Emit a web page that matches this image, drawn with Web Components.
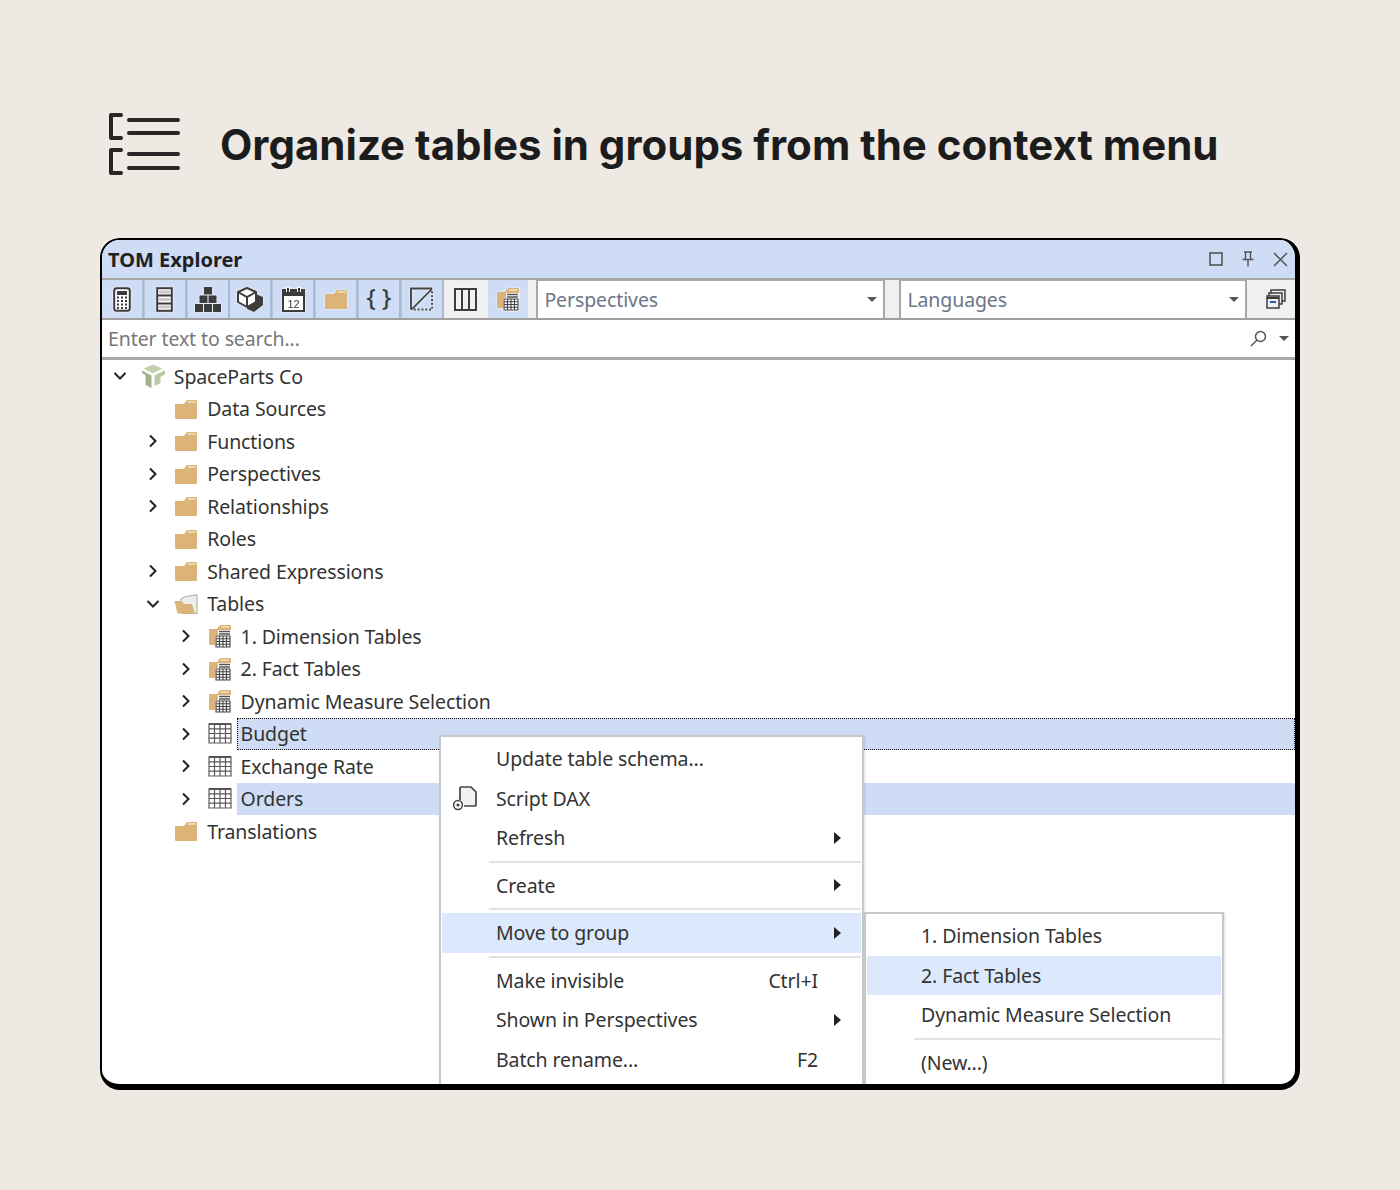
<!DOCTYPE html>
<html>
<head>
<meta charset="utf-8">
<title>TOM Explorer</title>
<style>
  html, body { margin: 0; padding: 0; background: #eee9e2; }
</style>
</head>
<body>
<page-shell>
  <page-heading>Organize tables in groups from the context menu</page-heading>
  <tom-explorer>
    <tree-row level="0" toggle="open" icon="model">SpaceParts Co</tree-row>
    <tree-row level="1" icon="folder">Data Sources</tree-row>
    <tree-row level="1" toggle="closed" icon="folder">Functions</tree-row>
    <tree-row level="1" toggle="closed" icon="folder">Perspectives</tree-row>
    <tree-row level="1" toggle="closed" icon="folder">Relationships</tree-row>
    <tree-row level="1" icon="folder">Roles</tree-row>
    <tree-row level="1" toggle="closed" icon="folder">Shared Expressions</tree-row>
    <tree-row level="1" toggle="open" icon="folder-open">Tables</tree-row>
    <tree-row level="2" toggle="closed" icon="folder-table">1. Dimension Tables</tree-row>
    <tree-row level="2" toggle="closed" icon="folder-table">2. Fact Tables</tree-row>
    <tree-row level="2" toggle="closed" icon="folder-table">Dynamic Measure Selection</tree-row>
    <tree-row level="2" toggle="closed" icon="table" selected focused>Budget</tree-row>
    <tree-row level="2" toggle="closed" icon="table">Exchange Rate</tree-row>
    <tree-row level="2" toggle="closed" icon="table" selected>Orders</tree-row>
    <tree-row level="1" icon="folder">Translations</tree-row>

    <context-menu slot="overlay" style="left:337px; top:495px; width:425px">
      <menu-item>Update table schema...</menu-item>
      <menu-item icon="script">Script DAX</menu-item>
      <menu-item arrow>Refresh</menu-item>
      <menu-sep></menu-sep>
      <menu-item arrow>Create</menu-item>
      <menu-sep></menu-sep>
      <menu-item arrow active>Move to group</menu-item>
      <menu-sep></menu-sep>
      <menu-item shortcut="Ctrl+I">Make invisible</menu-item>
      <menu-item arrow>Shown in Perspectives</menu-item>
      <menu-item shortcut="F2">Batch rename...</menu-item>
    </context-menu>
    <context-menu slot="overlay" style="left:762px; top:672px; width:360px">
      <menu-item>1. Dimension Tables</menu-item>
      <menu-item active>2. Fact Tables</menu-item>
      <menu-item>Dynamic Measure Selection</menu-item>
      <menu-sep></menu-sep>
      <menu-item>(New...)</menu-item>
    </context-menu>
  </tom-explorer>
</page-shell>

<script>
const UI_FONT = `"Noto Sans", "Open Sans", sans-serif`;

const ICONS = {
  folder: `<svg width="24" height="20" viewBox="0 0 24 20">
    <path d="M1 5 H10 L12.5 1.5 Q13 1 14 1 H22 Q23 1 23 2 V19 Q23 20 22 20 H2 Q1 20 1 19 Z" fill="#dcb478"/>
    <path d="M14 3 H21.5" stroke="#f4e6cc" stroke-width="1.4"/></svg>`,
  "folder-open": `<svg width="24" height="20" viewBox="0 0 24 20">
    <path d="M7 5 L12 2.5 L23 .8 V19.5 H8 Z" fill="#eeeeee" stroke="#aaa69e"/>
    <path d="M.5 7 H7.5 L10 10 H18 L21 19.5 H3.5 Z" fill="#dcb478"/></svg>`,
  "folder-table": `<svg width="24" height="24" viewBox="0 0 24 24">
    <path d="M1 5 H9 L11.5 1.5 Q12 1 13 1 H22 Q23 1 23 2 V20 Q23 21 22 21 H2 Q1 21 1 20 Z" fill="#dcb478"/>
    <path d="M13 3 H21" stroke="#f4e6cc" stroke-width="1.3"/>
    <path d="M10 6 H23 V24 H7 V11 H10 Z" fill="#fff"/>
    <path d="M11 7.5 H22 M11 10 H22" stroke="#555" stroke-width="1.4"/>
    <path d="M8 12 H22 V23 H8 Z M11.5 12 V23 M15 12 V23 M18.5 12 V23 M8 14.7 H22 M8 17.5 H22 M8 20.2 H22" fill="#fff" stroke="#444" stroke-width="1.1"/></svg>`,
  table: `<svg width="24" height="21" viewBox="0 0 24 21">
    <rect x=".5" y=".5" width="23" height="20" fill="#fff"/>
    <path d="M1 1 H23 V20 H1 Z M6.5 1 V20 M12 1 V20 M17.5 1 V20 M1 5.8 H23 M1 10.5 H23 M1 15.2 H23" fill="none" stroke="#5a5a5a" stroke-width="1.2"/>
    <path d="M1 1 H23" stroke="#555" stroke-width="2"/></svg>`,
  model: `<svg width="24" height="24" viewBox="0 0 24 24">
    <path d="M12 .5 L21.5 4.5 L12 9.5 L2.5 4.5 Z" fill="#c3cfae"/>
    <path d="M1 6.5 L10.5 11.5 V24 L4.5 21 V11 L1 9 Z" fill="#a3b48a"/>
    <path d="M13.5 11.5 L24 6 V10.5 L19.5 13 V19 L13.5 22 Z" fill="#bcc9a6"/></svg>`,
  script: `<svg width="26" height="25" viewBox="0 0 26 25">
    <path d="M8 14 V2 Q8 1 9 1 H19 L24 6 V19 Q24 20 23 20 H12" fill="#f1f1f3" stroke="#444" stroke-width="1.7"/>
    <circle cx="6" cy="19" r="4.4" fill="#fff" stroke="#444" stroke-width="1.5"/>
    <circle cx="6" cy="19" r="1.6" fill="#444"/></svg>`,
  calculator: `<svg width="18" height="25" viewBox="0 0 18 25">
    <rect x="1.2" y="1.2" width="15.6" height="22.6" rx="2.5" fill="#fff" stroke="#3c3c3c" stroke-width="2"/>
    <rect x="4" y="4" width="10" height="4" fill="#3c3c3c"/>
    <path d="M4 10.5 H14 M4 14 H14 M4 17.5 H14 M4 21 H14" stroke="#3c3c3c" stroke-width="2" stroke-dasharray="2 2"/></svg>`,
  rows: `<svg width="17" height="25" viewBox="0 0 17 25">
    <rect x="1.2" y="1.2" width="14.6" height="22.6" fill="#fff" stroke="#3c3c3c" stroke-width="2"/>
    <path d="M1 8.5 H16 M1 16.5 H16" stroke="#3c3c3c" stroke-width="2"/>
    <path d="M3 5 H14 M3 12.5 H14 M3 20 H14" stroke="#c9c9c9" stroke-width="3"/></svg>`,
  pyramid: `<svg width="26" height="25" viewBox="0 0 26 25" fill="#3c3c3c">
    <rect x="9" y="0" width="8" height="7.5"/>
    <rect x="4.5" y="8.5" width="8" height="7.5"/><rect x="13.5" y="8.5" width="8" height="7.5"/>
    <rect x="0" y="17" width="8" height="8"/><rect x="9" y="17" width="8" height="8"/><rect x="18" y="17" width="8" height="8"/></svg>`,
  cube: `<svg width="26" height="25" viewBox="0 0 26 25">
    <path d="M14 5 L26 10 V18 L17 25 L10 22 Z" fill="#3c3c3c"/>
    <path d="M10 1 L19 5 V15 L10 20 L1 15 V5 Z" fill="#fff" stroke="#3c3c3c" stroke-width="2" stroke-linejoin="round"/>
    <path d="M1 5 L10 10 L19 5 M10 10 V20" fill="none" stroke="#3c3c3c" stroke-width="2"/></svg>`,
  calendar: `<svg width="23" height="25" viewBox="0 0 23 25">
    <rect x="1" y="3" width="21" height="21" fill="#fff" stroke="#3c3c3c" stroke-width="2"/>
    <rect x="1" y="3" width="21" height="6" fill="#3c3c3c"/>
    <path d="M6 .5 V5 M17 .5 V5" stroke="#fff" stroke-width="4"/>
    <path d="M6 1 V5 M17 1 V5" stroke="#3c3c3c" stroke-width="2"/>
    <text x="11.5" y="21" text-anchor="middle" font-family="Liberation Sans, sans-serif" font-size="11" fill="#3c3c3c">12</text></svg>`,
  diagonal: `<svg width="23" height="24" viewBox="0 0 24 24" fill="none" stroke="#444" stroke-width="2">
    <path d="M1 23 V1 H23"/>
    <path d="M1.5 23 L23 1.5" stroke-width="1.8"/>
    <path d="M4 23 H23 V4" stroke-dasharray="2 2"/></svg>`,
  columns: `<svg width="23" height="23" viewBox="0 0 23 23" fill="none" stroke="#3c3c3c" stroke-width="2">
    <rect x="1" y="1" width="21" height="21"/><path d="M8 1 V22 M15 1 V22"/></svg>`,
  windows: `<svg width="20" height="20" viewBox="0 0 20 20" fill="none" stroke="#3c3c3c" stroke-width="1.5">
    <path d="M5 4.5 V1 H19 V12 H16"/><path d="M3 7.5 V4 H16 V15 H13"/>
    <rect x="1" y="7" width="12" height="12" fill="#f0f0f0"/><path d="M1 9 H13" stroke-width="2"/>
    <rect x="4" y="12" width="6" height="2" fill="#1a5fb4" stroke="none"/></svg>`,
  restore: `<svg width="14" height="14" viewBox="0 0 14 14" fill="none" stroke="#555" stroke-width="1.6"><rect x="1" y="1" width="12" height="12"/></svg>`,
  pin: `<svg width="14" height="16" viewBox="0 0 14 16" fill="none" stroke="#555" stroke-width="1.4"><path d="M3 1 H11 M4.5 1 V8 M9.5 1 V8 M1.5 8.5 H12.5 M7 8.5 V15.5"/></svg>`,
  close: `<svg width="15" height="15" viewBox="0 0 15 15" fill="none" stroke="#555" stroke-width="1.5"><path d="M1 1 L14 14 M14 1 L1 14"/></svg>`,
  search: `<svg width="17" height="17" viewBox="0 0 17 17" fill="none" stroke="#555" stroke-width="1.5"><circle cx="10.5" cy="6.5" r="5"/><path d="M6.8 10.2 L1 16"/></svg>`,
  "chevron-right": `<svg width="10" height="14" viewBox="0 0 10 14" fill="none" stroke="#222" stroke-width="2"><path d="M2 1.5 L7.5 7 L2 12.5"/></svg>`,
  "chevron-down": `<svg width="14" height="10" viewBox="0 0 14 10" fill="none" stroke="#222" stroke-width="2"><path d="M1.5 2 L7 7.5 L12.5 2"/></svg>`
};

class TomIcon extends HTMLElement {
  connectedCallback() {
    this.attachShadow({ mode: "open" });
    const name = this.getAttribute("name");
    this.shadowRoot.innerHTML = `
      <style>
        :host { display: inline-flex; align-items: center; justify-content: center; line-height: 0; }
      </style>
      ${ICONS[name] || ""}`;
  }
}

class PageShell extends HTMLElement {
  constructor() {
    super();
    this.attachShadow({ mode: "open" });
    this.shadowRoot.innerHTML = `
      <style>
        :host { display: block; width: 1400px; height: 1190px; background: #eee9e2; overflow: hidden; }
      </style>
      <slot></slot>`;
  }
}

class PageHeading extends HTMLElement {
  constructor() {
    super();
    this.attachShadow({ mode: "open" });
    this.shadowRoot.innerHTML = `
      <style>
        :host { display: flex; align-items: center; gap: 40px; height: 238px; padding: 50px 0 0 108px; box-sizing: border-box;
                font: 650 42px Inter, Lato, sans-serif; color: #1c1c1c; }
        svg { flex: none; }
        .t { white-space: nowrap; letter-spacing: 0; }
      </style>
      <svg width="72" height="62" viewBox="0 0 72 62" fill="none" stroke="#262626" stroke-width="4" stroke-linecap="round" stroke-linejoin="round">
        <path d="M13 2 H3 V25 H13"/><path d="M13 37 H3 V60 H13"/>
        <path d="M21 7 H70 M21 20 H70 M21 41 H70 M21 55 H70"/>
      </svg>
      <span class="t"><slot></slot></span>`;
  }
}

class TomExplorer extends HTMLElement {
  constructor() {
    super();
    this.attachShadow({ mode: "open" });
    const btns = ["calculator", "rows", "pyramid", "cube", "calendar", "folder", "braces", "diagonal", "columns", "folder-table"];
    const buttons = btns.map(n => {
      if (n === "braces") return `<div class="btn braces"><span>{ }</span></div>`;
      if (n === "columns") return `<div class="btn lit"><tom-icon name="columns"></tom-icon></div>`;
      return `<div class="btn"><tom-icon name="${n}"></tom-icon></div>`;
    }).join("");
    this.shadowRoot.innerHTML = `
      <style>
        :host { display: block; position: relative; margin: 0 100px; height: 852px; box-sizing: border-box;
                border: solid #000; border-width: 2px 5px 6px 2px; border-radius: 20px; overflow: hidden; background: #fff;
                font-family: ${UI_FONT}; color: #333; }
        .title { height: 38px; background: #cedcf5; display: flex; align-items: center; padding: 0 7px 0 6px; gap: 18px; box-sizing: border-box; }
        .title b { flex: 1; font-size: 20px; font-weight: 700; color: #222; }
        .tools { height: 42px; display: flex; background: #f0f0f0; box-sizing: border-box;
                 border-top: 2px solid #a9a9a9; border-bottom: 2px solid #a0a0a0; }
        .btn { width: 40px; margin-right: 2.8px; background: #cedcf5; display: flex; align-items: center; justify-content: center;
               box-shadow: 2.8px 0 0 #a9bbd2; }
        .btn tom-icon { filter: drop-shadow(0 0 1px #fff); }
        .btn.lit { background: #f0f0f0; box-shadow: none; width: 42px; margin-right: 2px; }
        .btn:nth-child(10) { margin-right: 0; box-shadow: none; }
        .braces { font-size: 24px; font-weight: 500; color: #3c3c3c; line-height: 1; }
        .braces span { position: relative; top: -2px; }
        .combo { width: 349px; margin-left: 8px; background: #fff; border: 2px solid #a9a9a9; border-width: 1px 2px 0 2px; box-sizing: border-box;
                 display: flex; align-items: center; padding: 0 5px 0 6px; font-size: 19.5px; letter-spacing: -0.1px; color: #6b7686; }
        .combo + .combo { margin-left: 14px; width: 348px; }
        .combo span { flex: 1; }
        .arrow { width: 0; height: 0; border: 5px solid transparent; border-top: 5px solid #555; border-bottom: 0; margin-right: 1px; }
        .end { flex: 1; display: flex; align-items: center; justify-content: center; padding-left: 10px; }
        .search { height: 40px; display: flex; align-items: center; padding: 0 5px 0 6px; box-sizing: border-box;
                  border-bottom: 3px solid #a8a8a8; font-size: 19.5px; letter-spacing: -0.1px; color: #777; }
        .search span { flex: 1; }
        .search .arrow { margin-left: 12px; }
      </style>
      <div class="title">
        <b>TOM Explorer</b>
        <tom-icon name="restore"></tom-icon>
        <tom-icon name="pin"></tom-icon>
        <tom-icon name="close"></tom-icon>
      </div>
      <div class="tools">
        ${buttons}
        <div class="combo"><span>Perspectives</span><div class="arrow"></div></div>
        <div class="combo"><span>Languages</span><div class="arrow"></div></div>
        <div class="end"><tom-icon name="windows"></tom-icon></div>
      </div>
      <div class="search">
        <span>Enter text to search...</span>
        <tom-icon name="search"></tom-icon>
        <div class="arrow"></div>
      </div>
      <div class="tree"><slot></slot></div>
      <slot name="overlay"></slot>`;
  }
}

class TreeRow extends HTMLElement {
  constructor() {
    super();
    this.attachShadow({ mode: "open" });
  }
  connectedCallback() {
    const level = Number(this.getAttribute("level") || 0);
    const toggle = this.getAttribute("toggle");
    const icon = this.getAttribute("icon");
    const chevron = toggle === "open" ? "chevron-down" : toggle === "closed" ? "chevron-right" : "";
    const sel = this.hasAttribute("selected");
    const foc = this.hasAttribute("focused");
    this.shadowRoot.innerHTML = `
      <style>
        :host { display: flex; height: 32.5px; padding-left: ${1 + level * 33.4}px; font-size: 19.5px; letter-spacing: -0.1px; color: #333; }
        .c, .i { flex: none; width: 33.4px; display: flex; align-items: center; justify-content: center; }
        .l { flex: 1; display: flex; align-items: center; padding-left: 4px; box-sizing: border-box; white-space: nowrap;
             background: ${sel ? "#cedcf5" : "transparent"};
             ${foc ? "outline: 1.5px dotted #111; outline-offset: -1.5px;" : ""} }
      </style>
      <div class="c">${chevron ? `<tom-icon name="${chevron}"></tom-icon>` : ""}</div>
      <div class="i"><tom-icon name="${icon}"></tom-icon></div>
      <div class="l"><slot></slot></div>`;
  }
}

class ContextMenu extends HTMLElement {
  constructor() {
    super();
    this.attachShadow({ mode: "open" });
    this.shadowRoot.innerHTML = `
      <style>
        :host { display: block; position: absolute; box-sizing: border-box; background: #fff;
                border: 2px solid #c8c8c8; padding: 2px 1px 30px; box-shadow: 1px 1px 2px rgba(0,0,0,.12); }
      </style>
      <slot></slot>`;
  }
}

class MenuItem extends HTMLElement {
  constructor() {
    super();
    this.attachShadow({ mode: "open" });
  }
  connectedCallback() {
    const icon = this.getAttribute("icon");
    const shortcut = this.getAttribute("shortcut");
    const arrow = this.hasAttribute("arrow");
    const active = this.hasAttribute("active");
    this.shadowRoot.innerHTML = `
      <style>
        :host { display: flex; align-items: center; height: 39.5px; font-size: 19.5px; letter-spacing: -0.1px; color: #333; white-space: nowrap;
                background: ${active ? "#dce8fb" : "transparent"}; }
        .g { flex: none; width: 54px; display: flex; align-items: center; justify-content: center; padding-right: 9px; box-sizing: border-box; }
        .t { flex: 1; }
        .s { margin-right: 43px; }
        .a { width: 0; height: 0; border: solid transparent; border-width: 6.5px 0 6.5px 7px; border-left-color: #222; margin-right: 20px; }
      </style>
      <div class="g">${icon ? `<tom-icon name="${icon}"></tom-icon>` : ""}</div>
      <div class="t"><slot></slot></div>
      ${shortcut ? `<div class="s">${shortcut}</div>` : ""}
      ${arrow ? `<div class="a"></div>` : ""}`;
  }
}

class MenuSep extends HTMLElement {
  constructor() {
    super();
    this.attachShadow({ mode: "open" });
    this.shadowRoot.innerHTML = `
      <style>
        :host { display: block; height: 2px; margin: 3px 0 3px 47px; background: #e3e3e3; }
      </style>`;
  }
}

customElements.define("tom-icon", TomIcon);
customElements.define("page-shell", PageShell);
customElements.define("page-heading", PageHeading);
customElements.define("tom-explorer", TomExplorer);
customElements.define("tree-row", TreeRow);
customElements.define("context-menu", ContextMenu);
customElements.define("menu-item", MenuItem);
customElements.define("menu-sep", MenuSep);
</script>
</body>
</html>
